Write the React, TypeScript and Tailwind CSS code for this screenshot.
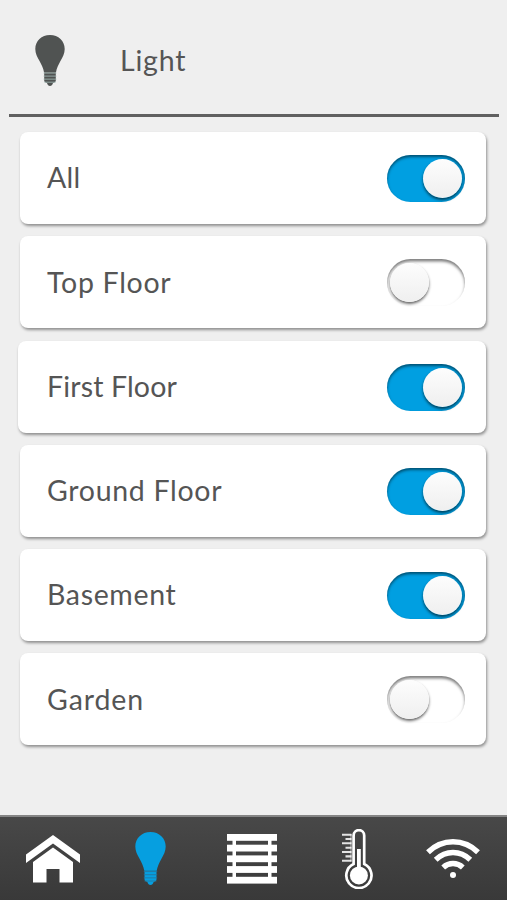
import React, { useState } from 'react';
import clsx from 'clsx';

const BulbIcon = ({ className, line }: { className: string; line: string }) => (
  <svg viewBox="0 0 30 52" preserveAspectRatio="none" className={className} fill="currentColor">
    <path d="M15 0C6.5 0 .3 6.2.3 14.2c0 4.600 2 8.100 4.100 12.100C6.600 30.500 8.300 34 9 38h12c.7-4 2.400-7.500 4.600-11.700 2.100-4 4.100-7.500 4.100-12.100C29.700 6.200 23.500 0 15 0z" />
    <path d="M9.200 38h11.600v8.300c0 1.300-1.200 2.200-2.800 2.700-.5 1.900-1.600 3-3 3s-2.500-1.100-3-3c-1.600-.5-2.800-1.400-2.800-2.700z" />
    <path d="M8.500 38.800h13M8.500 41.900h13M8.500 45h13M9.200 48.100h11.600" stroke={line} strokeWidth="0.8" />
  </svg>
);

const HomeIcon = () => (
  <svg viewBox="0 0 54 48" className="h-12 w-[54px]" fill="white">
    <path d="M27 0 54 19.500v8.500L27 8.500 0 28v-8.500z" />
    <path d="M27 12.500 47 27v20.500H33.500V34H20.500v13.500H7V27z" />
  </svg>
);

const BlindsIcon = () => (
  <svg viewBox="0 0 50 50" className="size-[50px]" fill="white">
    {[0, 10.7, 21.400, 32.100, 42.800].map((y) => (
      <rect key={y} x="0" y={y} width="50" height="6.800" />
    ))}
    <path d="M5.500 3H9v44H5.500zM41 3h3.500v44H41z" />
  </svg>
);

const ThermometerIcon = () => (
  <svg viewBox="0 0 31 60" className="h-[60px] w-[31px]" fill="none" stroke="white">
    <path d="M11.600 35V6.400a5.300 5.300 0 0 1 10.600 0V35a12.600 12.600 0 1 1-10.600 0z" strokeWidth="2.700" />
    <circle cx="16.900" cy="46.400" r="9" fill="white" stroke="none" />
    <path d="M16.900 20v20" strokeWidth="3.800" />
    <path d="M0 5.700h9.500M0 14.300h9.500M0 23h9.500M0 31.800h9.500" strokeWidth="2.100" opacity="0.85" />
    <path d="M3.500 10h6M3.500 18.700h6M3.500 27.400h6" strokeWidth="2.100" opacity="0.85" />
    <path d="M9 5v27.500" strokeWidth="1" opacity="0.7" />
  </svg>
);

const WifiIcon = () => (
  <svg viewBox="0 0 54 40" className="h-10 w-[54px]" fill="none" stroke="white" strokeWidth="5.500">
    <path d="M2 13.200C16.500-.7 37.500-.7 52 13.200" />
    <path d="M9.700 20.700c10.300-9.600 24.300-9.600 34.600 0" />
    <path d="M17.200 28.400c5.600-5.200 14-5.200 19.600 0" />
    <circle cx="27" cy="36" r="3" fill="white" stroke="none" />
  </svg>
);

const Toggle = ({ on, label, onClick }: { on: boolean; label: string; onClick: () => void }) => (
  <button
    role="switch"
    aria-checked={on}
    aria-label={label}
    onClick={onClick}
    className={clsx(
      'flex h-[47px] w-[78px] shrink-0 items-center rounded-full px-[3px]',
      on
        ? 'justify-end bg-[#009fe1] shadow-[inset_0_2px_3px_rgba(0,0,0,0.5)]'
        : 'justify-start bg-white shadow-[inset_0_2.5px_3px_rgba(0,0,0,0.5)]'
    )}
  >
    <span className="size-[39px] rounded-full bg-gradient-to-b from-[#fdfdfd] to-[#efefef] shadow-[0_2px_3px_rgba(0,0,0,0.6)]" />
  </button>
);

const App = () => {
  const [rooms, setRooms] = useState([
    { name: 'All', on: true, spacing: 'tracking-[0.3px]' },
    { name: 'Top Floor', on: false, spacing: 'tracking-[0.7px]' },
    { name: 'First Floor', on: true, spacing: 'tracking-[0.15px]' },
    { name: 'Ground Floor', on: true, spacing: 'tracking-[0.7px]' },
    { name: 'Basement', on: true, spacing: 'tracking-[0.65px]' },
    { name: 'Garden', on: false, spacing: 'tracking-[0.9px]' }
  ]);

  const toggleRoom = (name: string) => {
    setRooms(rooms.map((room) => (room.name === name ? { ...room, on: !room.on } : room)));
  };

  const tabs = [
    { key: 'home', icon: <HomeIcon />, margin: 'ml-[26px]' },
    { key: 'light', icon: <BulbIcon className="h-[53px] w-[31px] text-[#069fe0]" line="#26749a" />, margin: 'ml-[55px]' },
    { key: 'blinds', icon: <BlindsIcon />, margin: 'ml-[60.500px]' },
    { key: 'climate', icon: <ThermometerIcon />, margin: 'ml-[65.500px]' },
    { key: 'wifi', icon: <WifiIcon />, margin: 'ml-[52.500px]' }
  ];

  return (
    <div className="flex h-[900px] w-[507px] flex-col overflow-hidden bg-[#efefef] font-['Lato','Liberation_Sans',sans-serif] text-[28.500px] leading-none text-[#555]">
      {/* Header */}
      <header className="mr-2 ml-[9px] flex h-[117px] items-center border-b-[3px] border-[#606060]">
        <BulbIcon className="mt-[7px] ml-[26px] h-[51px] w-[30px] text-[#505352]" line="#a9c1bd" />
        <h1 className="mt-1.5 ml-[55px] tracking-[0.8px]">Light</h1>
      </header>

      {/* Rooms */}
      <main className="flex flex-1 flex-col gap-[12.300px] pt-[15px] pr-[21px] pl-5">
        {rooms.map((room) => (
          <div
            key={room.name}
            className={clsx(
              'flex h-[92px] items-center justify-between rounded-lg bg-white pt-px pr-[21px] shadow-[1px_2px_3px_rgba(0,0,0,0.4)]',
              room.name === 'First Floor' ? '-ml-0.5 pl-[29px]' : 'pl-[27px]'
            )}
          >
            <span className={clsx('pb-0.5', room.spacing)}>{room.name}</span>
            <Toggle on={room.on} label={room.name} onClick={() => toggleRoom(room.name)} />
          </div>
        ))}
      </main>

      {/* Tab bar */}
      <nav className="flex h-[85px] items-center border-t-2 border-[#858585] bg-gradient-to-b from-[#484848] to-[#393939]">
        {tabs.map((tab) => (
          <button key={tab.key} aria-label={tab.key} className={clsx('shrink-0', tab.margin)}>
            {tab.icon}
          </button>
        ))}
      </nav>
    </div>
  );
};

export default App;
